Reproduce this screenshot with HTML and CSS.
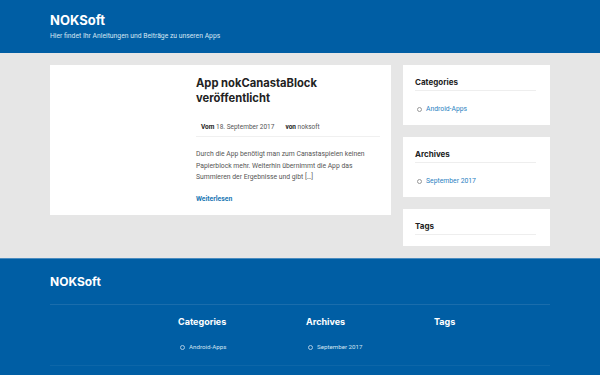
FILE: index.html
```html
<!doctype html>
<html>
    <head>
        <meta charset="utf-8">
        <title>NOKSoft</title>
        <link rel="stylesheet" href="styles.css">
    </head>
    <body>
        <div id="kopf">
            <div class="seiten-titel">NOKSoft</div>
            <div class="seiten-info">Hier findet Ihr Anleitungen und Beiträge zu unseren Apps</div>
        </div>

        <div id="inhalt">
            <div id="haupt">
                <div class="beitrag">
                    <div class="beitrag-bild"></div>
                    <div class="beitrag-text">
                        <div class="beitrag-titel">App nokCanastaBlock veröffentlicht</div>
                        <div class="beitrag-meta">
                            <span><b>Vom</b> 18. September 2017</span>
                            <span><b>von</b> noksoft</span>
                        </div>
                        <div class="beitrag-auszug">Durch die App benötigt man zum Canastaspielen keinen Papierblock mehr. Weiterhin übernimmt die App das Summieren der Ergebnisse und gibt [&hellip;]</div>
                        <a class="weiter" href="#">Weiterlesen</a>
                    </div>
                </div>
            </div>

            <div id="seitenleiste">
                <div class="widget">
                    <div class="widget-titel">Categories</div>
                    <ul class="liste">
                        <li><a href="#">Android-Apps</a></li>
                    </ul>
                </div>
                <div class="widget">
                    <div class="widget-titel">Archives</div>
                    <ul class="liste">
                        <li><a href="#">September 2017</a></li>
                    </ul>
                </div>
                <div class="widget">
                    <div class="widget-titel">Tags</div>
                </div>
            </div>
        </div>

        <div id="fuss">
            <div class="fuss-titel">NOKSoft</div>
            <div class="fuss-spalten">
                <div class="fuss-spalte">
                    <div class="fuss-kopf">Categories</div>
                    <ul class="fuss-liste">
                        <li><a href="#">Android-Apps</a></li>
                    </ul>
                </div>
                <div class="fuss-spalte">
                    <div class="fuss-kopf">Archives</div>
                    <ul class="fuss-liste">
                        <li><a href="#">September 2017</a></li>
                    </ul>
                </div>
                <div class="fuss-spalte">
                    <div class="fuss-kopf">Tags</div>
                </div>
            </div>
        </div>
    </body>
</html>
```

FILE: styles.css
```css
*{
    margin: 0px;
    padding: 0px;
    box-sizing: border-box;
}
body{
    background-color: #e6e6e6;
    font-family: Roboto, "Liberation Sans", sans-serif;
    color: #555;
}
a{
    text-decoration: none;
}
#kopf{
    height: 53px;
    padding-left: 50px;
    padding-top: 12px;
    background-color: #005ea4;
    color: white;
}
.seiten-titel{
    font-family: Inter, sans-serif;
    font-weight: bold;
    font-size: 13px;
    line-height: 16px;
}
.seiten-info{
    font-size: 6.8px;
    margin-top: 4px;
    color: #d6e6f3;
}
#inhalt{
    display: flex;
    gap: 12px;
    padding: 12px 50px 11px 50px;
    height: 205px;
}
#haupt{
    width: 341px;
}
.beitrag{
    display: flex;
    background-color: white;
    height: 150px;
}
.beitrag-bild{
    width: 130px;
}
.beitrag-text{
    flex: 1;
    padding: 11px 11px 0px 16px;
}
.beitrag-titel{
    font-family: Inter, sans-serif;
    font-weight: bold;
    font-size: 11.2px;
    line-height: 15px;
    color: #222;
    width: 140px;
}
.beitrag-meta{
    margin-top: 13px;
    padding: 4px 5px;
    font-size: 6.5px;
    line-height: 9px;
    border-bottom: 1px solid #f0f0f0;
    display: flex;
    gap: 11px;
}
.beitrag-meta b{
    color: #222;
}
.beitrag-auszug{
    margin-top: 12px;
    font-size: 6.8px;
    line-height: 11.5px;
}
.weiter{
    display: block;
    margin-top: 11px;
    font-size: 6.8px;
    font-weight: bold;
    color: #1b78b4;
}
#seitenleiste{
    width: 147px;
    display: flex;
    flex-direction: column;
    gap: 12px;
}
.widget{
    background-color: white;
    padding: 12px 14px 11px 12px;
}
.widget-titel{
    font-family: Inter, sans-serif;
    font-weight: bold;
    font-size: 8px;
    line-height: 10px;
    color: #222;
    padding-bottom: 3px;
    border-bottom: 1px solid #eeeeee;
}
.liste{
    list-style: none;
    margin-top: 13px;
    font-size: 6.8px;
    line-height: 10px;
    padding-left: 2px;
}
.liste li::before,
.fuss-liste li::before{
    content: "";
    display: inline-block;
    width: 3px;
    height: 3px;
    border: 1px solid #999;
    border-radius: 50%;
    margin-right: 4px;
    vertical-align: middle;
}
.liste a{
    color: #2a82bf;
}
#fuss{
    height: 117px;
    background-color: #005ea4;
    border-top: 1px solid #4b8cc0;
    padding: 15px 50px 0px 50px;
}
.fuss-titel{
    font-family: Inter, sans-serif;
    font-weight: bold;
    font-size: 12px;
    line-height: 16px;
    color: white;
    padding-bottom: 14px;
    border-bottom: 1px solid #1a6dac;
}
.fuss-spalten{
    display: flex;
    padding-left: 128px;
    padding-top: 10px;
    height: 61px;
    border-bottom: 1px solid #0d66a8;
}
.fuss-spalte{
    flex: none;
    width: 128px;
}
.fuss-kopf{
    font-family: Inter, sans-serif;
    font-weight: bold;
    font-size: 9px;
    line-height: 14px;
    color: white;
}
.fuss-liste{
    list-style: none;
    margin-top: 14px;
    padding-left: 2px;
    font-size: 6.2px;
    line-height: 9px;
}
.fuss-liste li::before{
    border-color: #a9c8e2;
}
.fuss-liste a{
    color: #d2e3f1;
}
```
